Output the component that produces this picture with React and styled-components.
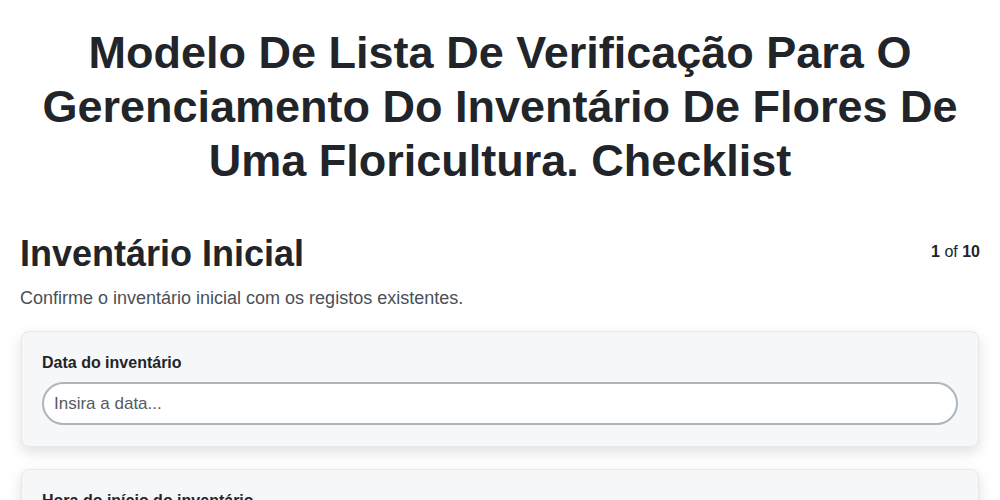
import React from "react";
import styled, { createGlobalStyle } from "styled-components";

const Global = createGlobalStyle`
  * { box-sizing: border-box; }
  body {
    margin: 0;
    background: #ffffff;
    font-family: "Liberation Sans", Arial, Helvetica, sans-serif;
    color: #212529;
  }
`;

const Page = styled.main`
  padding: 0 20px;
`;

const Title = styled.h1`
  margin: 26px 0 0;
  text-align: center;
  font-size: 45px;
  line-height: 54px;
  font-weight: 700;
  color: #212529;
`;

const SectionHeader = styled.div`
  display: flex;
  justify-content: space-between;
  align-items: flex-start;
  margin-top: 44px;
`;

const SectionTitle = styled.h2`
  margin: 0;
  font-size: 36px;
  line-height: 43px;
  font-weight: 700;
  color: #212529;
`;

const Counter = styled.div`
  font-size: 16px;
  line-height: 24px;
  margin-top: 8px;
  color: #212529;
  b { font-weight: 700; }
`;

const Description = styled.p`
  margin: 10px 0 19px;
  font-size: 18px;
  line-height: 27px;
  color: #495057;
`;

const Card = styled.section`
  background: #f6f7f9;
  border: 1px solid #e6e8ec;
  border-radius: 8px;
  box-shadow: 0 5px 14px rgba(0, 0, 0, 0.13);
  padding: 19px 20px 21px;
  margin: 0 1px 22px;
`;

const Label = styled.label`
  display: block;
  font-size: 16px;
  line-height: 24px;
  font-weight: 700;
  color: #212529;
  margin-bottom: 7px;
`;

const Input = styled.input`
  display: block;
  width: 100%;
  height: 43px;
  border: 2px solid #adb5bd;
  border-radius: 999px;
  background: #ffffff;
  padding: 0 10px;
  font-family: inherit;
  font-size: 17px;
  color: #212529;
  outline: none;
  &::placeholder { color: #555b62; }
`;

const fields = [
  { label: "Data do inventário", placeholder: "Insira a data..." },
  { label: "Hora do início do inventário", placeholder: "Insira a hora..." },
];

export default function App() {
  return (
    <>
      <Global />
      <Page>
        <Title>
          Modelo De Lista De Verificação Para O Gerenciamento Do Inventário De
          Flores De Uma Floricultura. Checklist
        </Title>
        <SectionHeader>
          <SectionTitle>Inventário Inicial</SectionTitle>
          <Counter>
            <b>1</b> of <b>10</b>
          </Counter>
        </SectionHeader>
        <Description>Confirme o inventário inicial com os registos existentes.</Description>
        {fields.map((f) => (
          <Card key={f.label}>
            <Label>{f.label}</Label>
            <Input placeholder={f.placeholder} />
          </Card>
        ))}
      </Page>
    </>
  );
}
